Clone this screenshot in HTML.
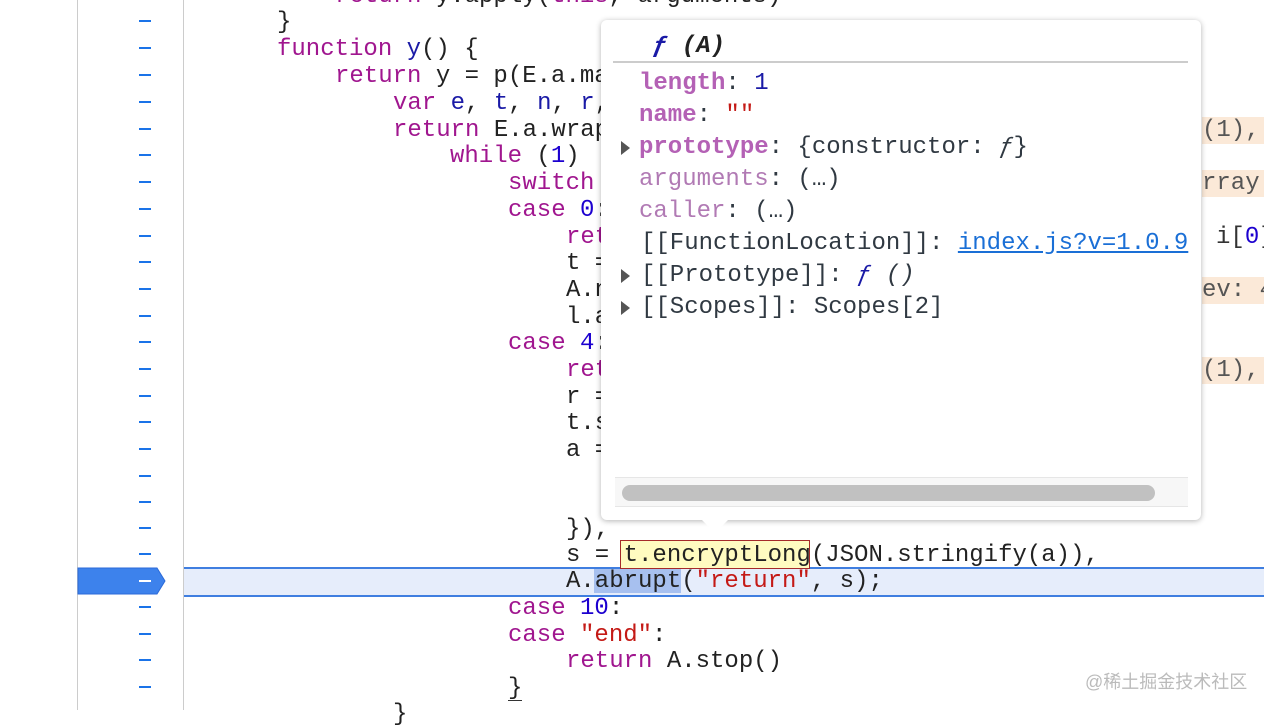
<!DOCTYPE html>
<html><head><meta charset="utf-8"><style>
body{margin:0;width:1264px;height:710px;overflow:hidden;background:#fff;position:relative;font-family:"Liberation Mono","DejaVu Sans Mono",monospace;}
.l{position:absolute;font-size:24px;line-height:27px;height:27px;white-space:pre;color:#222;}
.k{color:#a0168f}.n{color:#1c00cf}.s{color:#c41a16}.v{color:#1a1aa6}
.d{position:absolute;left:139px;width:12px;height:2px;background:#1a73e8}
.pe{position:absolute;background:#fbe9d8;color:#555;font-size:24px;line-height:27px;height:27px;white-space:pre;}
#pop{position:absolute;left:601px;top:20px;width:600px;height:500px;background:#fff;border-radius:6px;box-shadow:0 1px 6px rgba(0,0,0,.3);}
.p{position:absolute;left:38px;font-size:24px;line-height:30px;white-space:pre;color:#303942}
.pk{color:#b461b5;font-weight:bold}.pg{color:#b17ab4}
.tri{position:absolute;left:20px;width:0;height:0;border-top:7px solid transparent;border-bottom:7px solid transparent;border-left:9px solid #555}
</style></head><body>
<div style="position:absolute;left:77px;top:0;width:1px;height:710px;background:#ccc"></div>
<div style="position:absolute;left:183px;top:0;width:1px;height:710px;background:#ccc"></div>
<div style="position:absolute;left:184px;top:567px;width:1080px;height:26px;background:#e6edfb;border-top:2px solid #3f7ee0;border-bottom:2px solid #3f7ee0"></div>
<svg style="position:absolute;left:77px;top:567px" width="90" height="28"><path d="M1 1H80L88 14L80 27H1Z" fill="#3d82ec" stroke="#2b6ad8"/></svg>
<div class="d" style="top:20px"></div><div class="d" style="top:47px"></div><div class="d" style="top:74px"></div><div class="d" style="top:101px"></div><div class="d" style="top:128px"></div><div class="d" style="top:154px"></div><div class="d" style="top:181px"></div><div class="d" style="top:208px"></div><div class="d" style="top:235px"></div><div class="d" style="top:261px"></div><div class="d" style="top:288px"></div><div class="d" style="top:315px"></div><div class="d" style="top:341px"></div><div class="d" style="top:368px"></div><div class="d" style="top:395px"></div><div class="d" style="top:421px"></div><div class="d" style="top:448px"></div><div class="d" style="top:475px"></div><div class="d" style="top:501px"></div><div class="d" style="top:527px"></div><div class="d" style="top:553px"></div><div class="d" style="top:580px;background:#fff"></div><div class="d" style="top:606px"></div><div class="d" style="top:633px"></div><div class="d" style="top:659px"></div><div class="d" style="top:686px"></div>

<div class="l" style="left:335px;top:-17px"><span class="k">return</span> y.apply(<span class="k">this</span>, arguments)</div>
<div class="l" style="left:277px;top:9px">}</div>
<div class="l" style="left:277px;top:36px"><span class="k">function</span> <span class="v">y</span>() {</div>
<div class="l" style="left:335px;top:63px"><span class="k">return</span> y = p(E.a.mark</div>
<div class="l" style="left:393px;top:90px"><span class="k">var</span> <span class="v">e</span>, <span class="v">t</span>, <span class="v">n</span>, <span class="v">r</span>,</div>
<div class="l" style="left:393px;top:117px"><span class="k">return</span> E.a.wrap</div>
<div class="l" style="left:450px;top:143px"><span class="k">while</span> (<span class="n">1</span>)</div>
<div class="l" style="left:508px;top:170px"><span class="k">switch</span></div>
<div class="l" style="left:508px;top:197px"><span class="k">case</span> <span class="n">0</span>:</div>
<div class="l" style="left:566px;top:224px"><span class="k">return</span></div>
<div class="l" style="left:566px;top:250px">t = </div>
<div class="l" style="left:566px;top:277px">A.n</div>
<div class="l" style="left:566px;top:304px">l.a</div>
<div class="l" style="left:508px;top:330px"><span class="k">case</span> <span class="n">4</span>:</div>
<div class="l" style="left:566px;top:357px"><span class="k">return</span></div>
<div class="l" style="left:566px;top:384px">r = </div>
<div class="l" style="left:566px;top:410px">t.s</div>
<div class="l" style="left:566px;top:437px">a = </div>
<div class="l" style="left:566px;top:516px">}),</div>
<div style="position:absolute;left:620px;top:540px;width:188px;height:27px;background:#fffbc0;border:1px solid #a52a2a"></div>
<div class="l" style="left:566px;top:542px">s = t.encryptLong(JSON.stringify(a)),</div>
<div style="position:absolute;left:594px;top:569px;width:87px;height:24px;background:#a7c0ef"></div>
<div class="l" style="left:566px;top:568px">A.abrupt(<span class="s">"return"</span>, s);</div>
<div class="l" style="left:508px;top:595px"><span class="k">case</span> <span class="n">10</span>:</div>
<div class="l" style="left:508px;top:622px"><span class="k">case</span> <span class="s">"end"</span>:</div>
<div class="l" style="left:566px;top:648px"><span class="k">return</span> A.stop()</div>
<div class="l" style="left:508px;top:675px">}</div>
<div style="position:absolute;left:508px;top:700px;width:14px;height:1px;background:#333"></div>
<div class="l" style="left:393px;top:701px">}</div>

<div class="pe" style="left:1202px;top:117px">(1), </div>
<div class="pe" style="left:1202px;top:170px">rray </div>
<div class="l" style="left:1216px;top:224px;color:#333">i[<span class="n">0</span>]</div>
<div class="pe" style="left:1202px;top:277px">ev: 4</div>
<div class="pe" style="left:1202px;top:357px">(1), </div>

<div id="pop">
<div class="p" style="left:52px;top:12px;font-weight:bold;font-style:italic;color:#222"><span style="color:#1a1aa6">ƒ</span> (A)</div>
<div style="position:absolute;left:12px;top:41px;width:575px;height:2px;background:#ccc"></div>
<div class="p" style="top:49px"><span class="pk">length</span>: <span style="color:#1a1aa6">1</span></div>
<div class="p" style="top:81px"><span class="pk">name</span>: <span class="s">""</span></div>
<div class="tri" style="top:121px"></div>
<div class="p" style="top:113px"><span class="pk">prototype</span>: {constructor: <i>ƒ</i>}</div>
<div class="p" style="top:145px"><span class="pg">arguments</span>: (…)</div>
<div class="p" style="top:177px"><span class="pg">caller</span>: (…)</div>
<div class="p" style="top:209px;left:40px">[[FunctionLocation]]: <span style="color:#1a6fd6;text-decoration:underline">index.js?v=1.0.9</span></div>
<div class="tri" style="top:249px"></div>
<div class="p" style="top:241px;left:40px">[[Prototype]]: <i style="color:#1a1aa6">ƒ</i> <i>()</i></div>
<div class="tri" style="top:281px"></div>
<div class="p" style="top:273px;left:40px">[[Scopes]]: Scopes[2]</div>
<div style="position:absolute;left:14px;top:457px;width:573px;height:28px;background:#f7f7f7;border-top:1px solid #e6e6e6;border-bottom:1px solid #e6e6e6"></div>
<div style="position:absolute;left:21px;top:465px;width:533px;height:16px;background:#c1c1c1;border-radius:8px"></div>
<svg style="position:absolute;left:100px;top:499px" width="28" height="16"><path d="M0 0L14 14L28 0Z" fill="#fff"/></svg>
</div>
<div style="position:absolute;left:1085px;top:668px;font-family:'Liberation Sans','Noto Sans CJK SC',sans-serif;font-size:18px;color:#bbb">@稀土掘金技术社区</div>
</body></html>
